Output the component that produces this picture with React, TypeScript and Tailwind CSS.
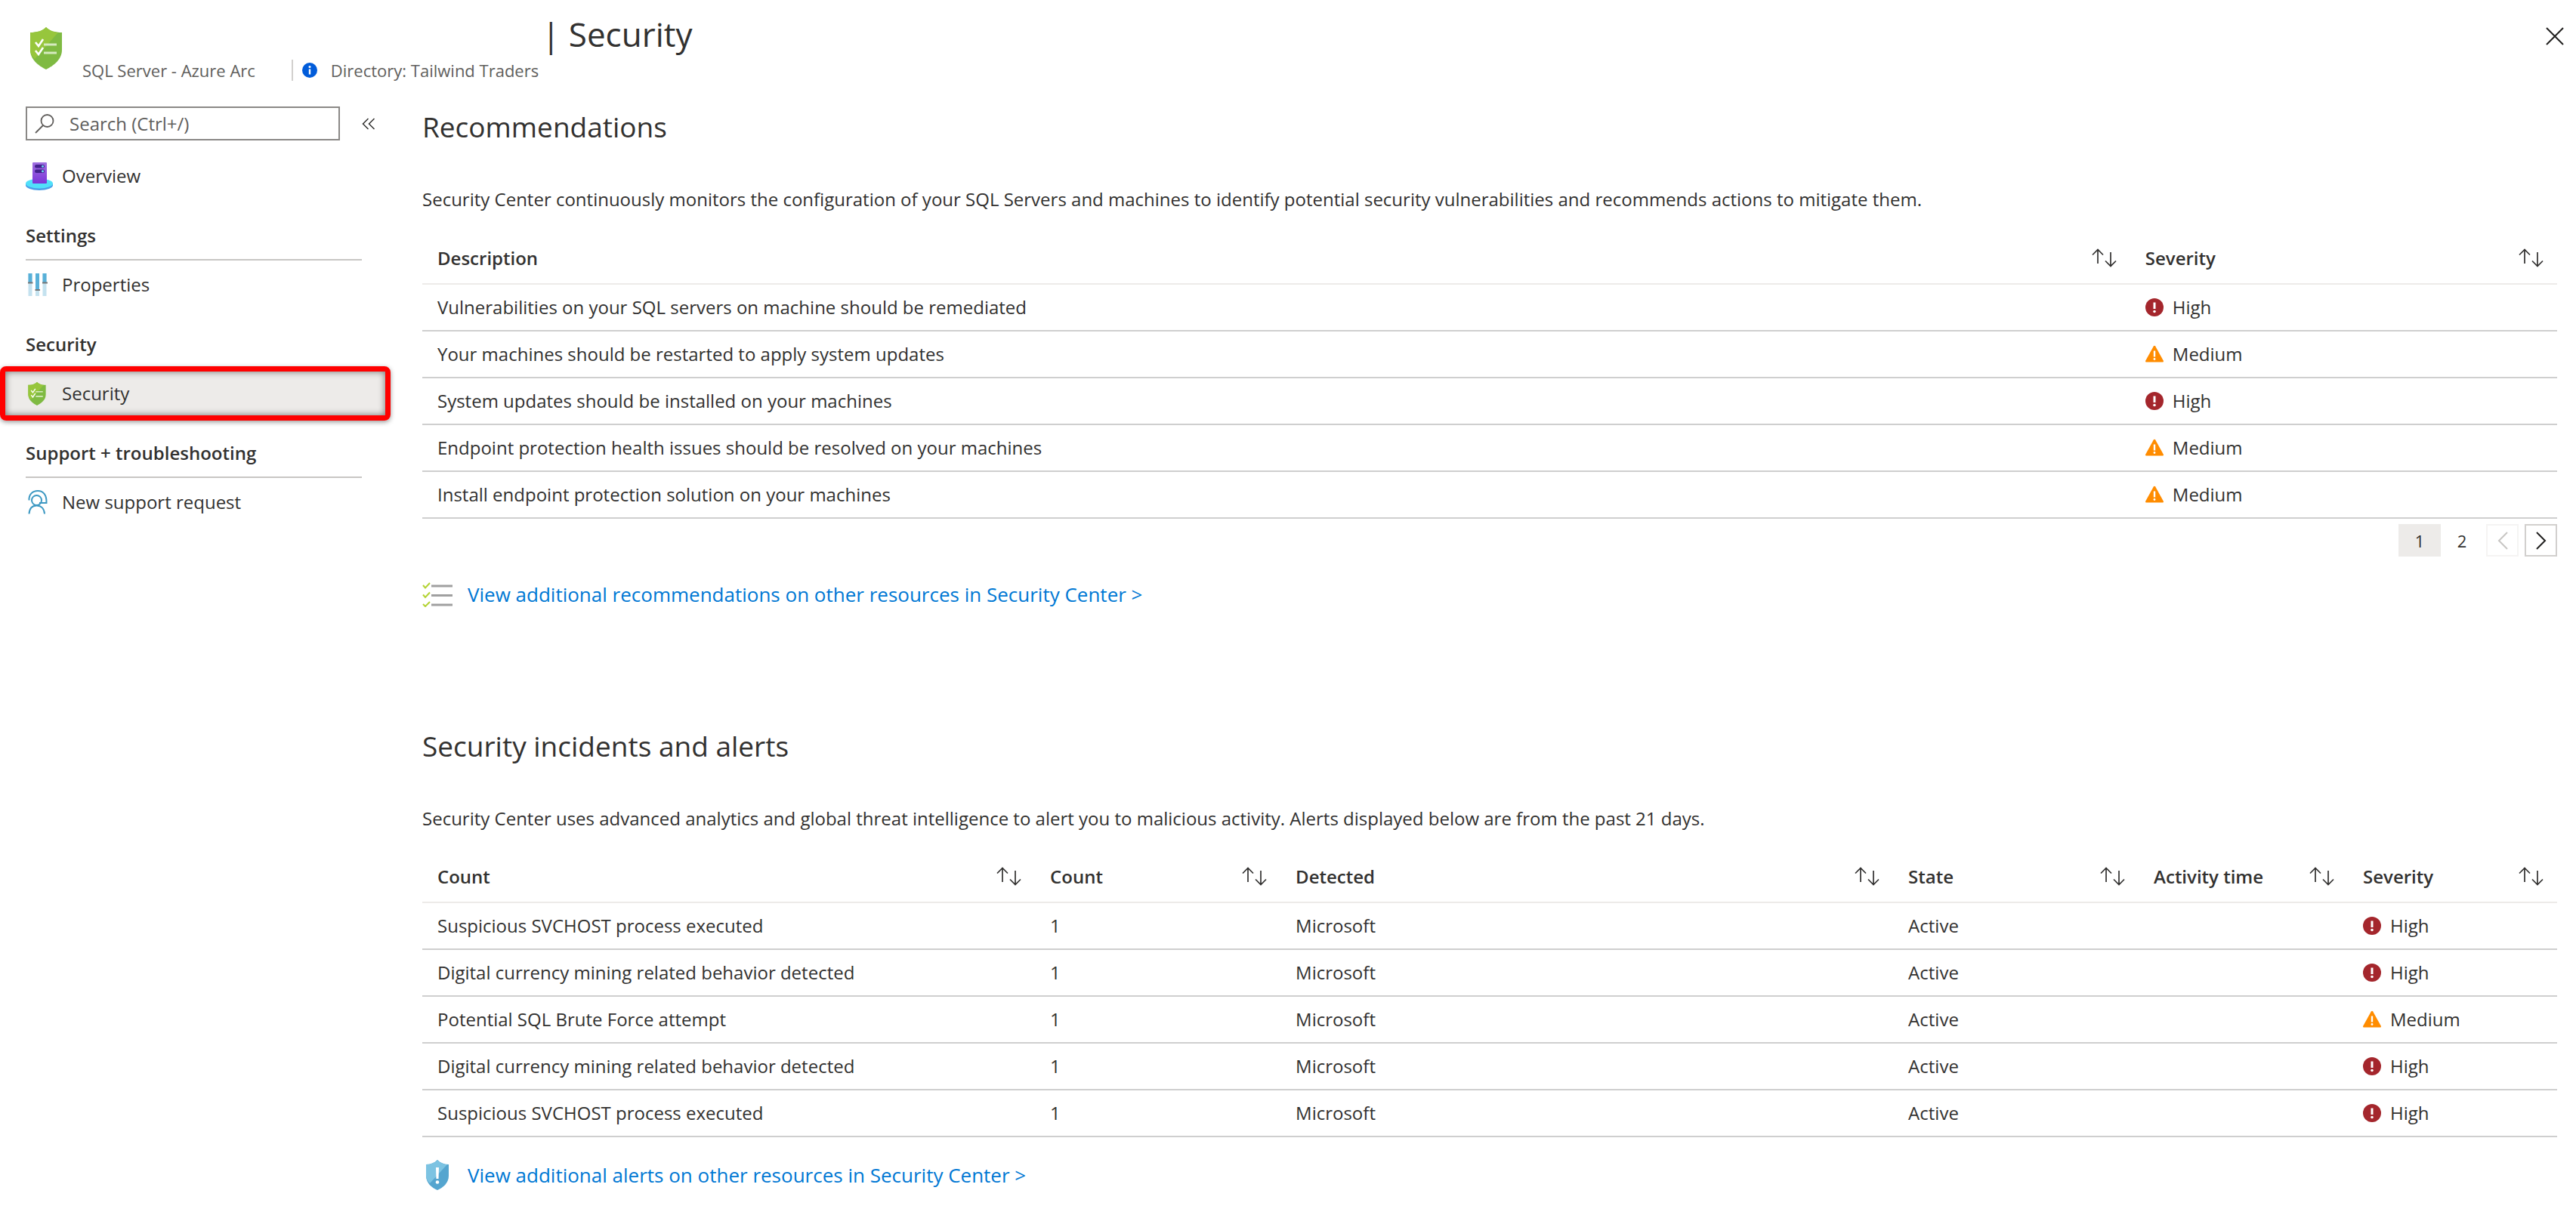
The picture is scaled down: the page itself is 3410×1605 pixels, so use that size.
import React from "react";

type Level = "High" | "Medium";

function ShieldCheck({ className }: { className: string }) {
  return (
    <svg viewBox="0 0 42 56" className={className} aria-hidden="true">
      <path d="M21 0C26 5 33 7 42 7V30C42 43 31 51 21 56C11 51 0 43 0 30V7C9 7 16 5 21 0Z" fill="#7fba42" />
      <path d="M21 0C26 5 33 7 37 7L6 42C2 38 0 34 0 30V7C9 7 16 5 21 0Z" fill="#97c63c" />
      <path d="M7 20L11 25L17 16M7 31L11 36L17 27" fill="none" stroke="#fff" strokeWidth="2.6" />
      <path d="M18 23H35M18 34H35" stroke="#d6eabf" strokeWidth="3" />
    </svg>
  );
}

function InfoIcon() {
  return (
    <svg viewBox="0 0 20 20" className="size-5" aria-hidden="true">
      <circle cx="10" cy="10" r="10" fill="#015cda" />
      <path d="M10 8.5V15.5" stroke="#fff" strokeWidth="2.4" />
      <circle cx="10" cy="5.4" r="1.5" fill="#fff" />
    </svg>
  );
}

function ServerIcon() {
  return (
    <svg viewBox="0 0 36 38" className="h-[38px] w-9" aria-hidden="true">
      <path d="M0 29V31.500C0 35 8 38 18 38S36 35 36 31.500V29Z" fill="#4a9fe8" />
      <ellipse cx="18" cy="29" rx="18" ry="6.500" fill="#50e0fa" />
      <defs>
        <linearGradient id="tower" x1="0" y1="0" x2="0" y2="1">
          <stop offset="0" stopColor="#a070e0" />
          <stop offset="1" stopColor="#7a35d8" />
        </linearGradient>
      </defs>
      <rect x="9" y="1" width="19" height="28" rx="1" fill="url(#tower)" />
      <rect x="12" y="4" width="13" height="4.5" rx="2.2" fill="#42218c" />
      <rect x="12" y="10.5" width="13" height="4.5" rx="2.2" fill="#42218c" />
      <circle cx="22.5" cy="6.2" r="1.5" fill="#6fd8f5" />
      <circle cx="22.5" cy="12.7" r="1.5" fill="#6fd8f5" />
    </svg>
  );
}

function SlidersIcon() {
  return (
    <svg viewBox="0 0 26 30" className="ml-[3px] h-[30px] w-[26px]" aria-hidden="true">
      <path d="M3 0V30M12.500 0V30M22 0V30" stroke="#c4e2ef" strokeWidth="5" />
      <path d="M3 0V12M12.500 0V21M22 0V12" stroke="#58b0d8" strokeWidth="5" />
      <path d="M0 12.500H6.500M9.500 22H16M19 12.500H26" stroke="#777" strokeWidth="2" />
    </svg>
  );
}

function SupportIcon() {
  return (
    <svg viewBox="0 0 26 32" className="ml-[3px] h-8 w-[26px]" fill="none" stroke="#3c98c2" strokeWidth="2" aria-hidden="true">
      <path d="M1.500 13.500C1 6 6 1 13 1S25 6 24.500 17H15" />
      <circle cx="11.500" cy="13.500" r="6.500" />
      <path d="M1.500 31.500C2 24 6 20.500 11.500 20.500S21.500 24 22 31.500" />
    </svg>
  );
}

function SortIcon() {
  return (
    <svg viewBox="0 0 33 25" className="h-[25px] w-[33px]" fill="none" stroke="#323130" strokeWidth="1.7" aria-hidden="true">
      <path d="M8 20V1.500M1 8.500L8 1.500L15 8.500M25 5V23.500M18 16.500L25 23.500L32 16.500" />
    </svg>
  );
}

function ChecklistIcon() {
  return (
    <svg viewBox="0 0 40 33" className="h-[33px] w-10" fill="none" aria-hidden="true">
      <path d="M1 4L4 7.500L10 1M1 16.500L4 20L10 13.500M1 29L4 32L10 26" stroke="#b4d334" strokeWidth="2" />
      <path d="M12 5H40M12 17.500H40M12 30H40" stroke="#a0a0a0" strokeWidth="3" />
    </svg>
  );
}

function AlertShield() {
  return (
    <svg viewBox="0 0 30 40" className="h-10 w-[30px]" aria-hidden="true">
      <path d="M15 0C19 4 24 6 30 6V21C30 31 22 37 15 40C8 37 0 31 0 21V6C6 6 11 4 15 0Z" fill="#55a5cf" />
      <path d="M15 0C19 4 24 6 28 6L5 31C2 28 0 25 0 21V6C6 6 11 4 15 0Z" fill="#7cc3e2" />
      <path d="M13 10H17L16.500 25H13.500Z" fill="#fff" />
      <circle cx="15" cy="29.500" r="2.300" fill="#fff" />
    </svg>
  );
}

function SeverityIcon({ level }: { level: Level }) {
  return level === "High" ? (
    <svg viewBox="0 0 24 24" className="size-6 shrink-0" aria-hidden="true">
      <circle cx="12" cy="12" r="12" fill="#a4262c" />
      <path d="M12 5.500V14" stroke="#fff" strokeWidth="3" />
      <circle cx="12" cy="17.500" r="1.800" fill="#fff" />
    </svg>
  ) : (
    <svg viewBox="0 0 24 24" className="size-6 shrink-0" aria-hidden="true">
      <path d="M10.800 1.500Q12 0 13.200 1.500L24 21Q24 22.500 23 22.500H1Q0 22.500 0 21Z" fill="#ff8c00" />
      <path d="M12 7.500V15.500" stroke="#fff" strokeWidth="2.400" />
      <circle cx="12" cy="18.500" r="1.400" fill="#fff" />
    </svg>
  );
}

function Severity({ level }: { level: Level }) {
  return (
    <span className="flex items-center gap-3">
      <SeverityIcon level={level} />
      {level}
    </span>
  );
}

type Column = { label: string; width: string };

function DataTable({ label, columns, rows }: { label: string; columns: Column[]; rows: string[][] }) {
  return (
    <table aria-label={label} className="w-full table-fixed border-collapse text-left">
      <thead>
        <tr className="h-[68px] border-b-2 border-[#edebe9]">
          {columns.map((c, i) => (
            <th key={i} scope="col" className={`${c.width} pr-[18px] pl-5 font-semibold`}>
              <button type="button" className="flex w-full items-center justify-between font-semibold">
                {c.label}
                <SortIcon />
              </button>
            </th>
          ))}
        </tr>
      </thead>
      <tbody>
        {rows.map((row, r) => (
          <tr key={r} className="h-[62px] border-b-2 border-[#cfcfcf]">
            {row.map((cell, i) => (
              <td key={i} className="pl-5 whitespace-nowrap">
                {i === row.length - 1 ? <Severity level={cell as Level} /> : cell}
              </td>
            ))}
          </tr>
        ))}
      </tbody>
    </table>
  );
}

const recommendationColumns: Column[] = [
  { label: "Description", width: "w-[80%]" },
  { label: "Severity", width: "w-[20%]" },
];

const recommendations = [
  ["Vulnerabilities on your SQL servers on machine should be remediated", "High"],
  ["Your machines should be restarted to apply system updates", "Medium"],
  ["System updates should be installed on your machines", "High"],
  ["Endpoint protection health issues should be resolved on your machines", "Medium"],
  ["Install endpoint protection solution on your machines", "Medium"],
];

const alertColumns: Column[] = [
  { label: "Count", width: "w-[28.7%]" },
  { label: "Count", width: "w-[11.5%]" },
  { label: "Detected", width: "w-[28.7%]" },
  { label: "State", width: "w-[11.5%]" },
  { label: "Activity time", width: "w-[9.8%]" },
  { label: "Severity", width: "w-[9.8%]" },
];

const alerts = [
  ["Suspicious SVCHOST process executed", "1", "Microsoft", "Active", "", "High"],
  ["Digital currency mining related behavior detected", "1", "Microsoft", "Active", "", "High"],
  ["Potential SQL Brute Force attempt", "1", "Microsoft", "Active", "", "Medium"],
  ["Digital currency mining related behavior detected", "1", "Microsoft", "Active", "", "High"],
  ["Suspicious SVCHOST process executed", "1", "Microsoft", "Active", "", "High"],
];

function NavLink({ icon, children }: { icon: React.ReactNode; children: React.ReactNode }) {
  return (
    <a href="#" className="flex h-16 items-center pl-[34px]">
      <span className="flex w-12">{icon}</span>
      {children}
    </a>
  );
}

function NavHeading({ children, line = true }: { children: React.ReactNode; line?: boolean }) {
  return (
    <h2 className={`mt-4 mr-[38px] ml-[34px] flex h-16 items-center border-b-2 font-semibold ${line ? "border-[#c8c6c4]" : "border-transparent"}`}>
      {children}
    </h2>
  );
}

function Sidebar() {
  return (
    <nav aria-label="Resource menu" className="w-[517px] shrink-0">
      <div className="mb-[15px] flex items-center">
        <label className="ml-[34px] flex h-[45px] w-[416px] items-center border-2 border-[#8a8886]">
          <svg viewBox="0 0 26 26" className="ml-2.5 size-[26px]" fill="none" stroke="#605e5c" strokeWidth="1.8" aria-hidden="true">
            <circle cx="16.500" cy="9" r="8" />
            <path d="M11 15L1 25" />
          </svg>
          <input type="search" aria-label="Search" placeholder="Search (Ctrl+/)" className="ml-5 min-w-0 flex-1 outline-none placeholder:text-[#605e5c]" />
        </label>
        <button type="button" aria-label="Collapse menu" className="ml-[29px]">
          <svg viewBox="0 0 18 16" className="h-4 w-[18px]" fill="none" stroke="#323130" strokeWidth="1.5" aria-hidden="true">
            <path d="M8.500 1L1.500 8L8.500 15M16.500 1L9.500 8L16.500 15" />
          </svg>
        </button>
      </div>
      <NavLink icon={<ServerIcon />}>Overview</NavLink>
      <NavHeading>Settings</NavHeading>
      <NavLink icon={<SlidersIcon />}>Properties</NavLink>
      <NavHeading line={false}>Security</NavHeading>
      <div className="relative bg-[#edebe9]">
        <NavLink icon={<ShieldCheck className="ml-[3px] h-[31px] w-6" />}>Security</NavLink>
        <div className="pointer-events-none absolute inset-x-0 -inset-y-1 rounded-lg border-[7px] border-[#ff0000] shadow-[inset_0_0_10px_#0008,0_2px_6px_#0006]" />
      </div>
      <NavHeading>Support + troubleshooting</NavHeading>
      <NavLink icon={<SupportIcon />}>New support request</NavLink>
    </nav>
  );
}

function SectionLink({ icon, children }: { icon: React.ReactNode; children: React.ReactNode }) {
  return (
    <a href="#" className="flex h-10 items-center text-[26px] text-[#0078d4]">
      <span className="flex w-[60px]">{icon}</span>
      {children}
    </a>
  );
}

function Pager() {
  return (
    <div className="mt-[7px] flex h-[43px] justify-end text-[22px]">
      <button type="button" className="w-14 bg-[#edebe9]">1</button>
      <button type="button" className="w-14">2</button>
      <button type="button" disabled aria-label="Previous page" className="ml-1 flex w-[43px] items-center justify-center border-2 border-[#f5f4f3]">
        <svg viewBox="0 0 14 24" className="h-6 w-3.5" fill="none" stroke="#c8c6c4" strokeWidth="2" aria-hidden="true">
          <path d="M13 1L2 12L13 23" />
        </svg>
      </button>
      <button type="button" aria-label="Next page" className="ml-2 flex w-[43px] items-center justify-center border-2 border-[#d2d0ce]">
        <svg viewBox="0 0 14 24" className="h-6 w-3.5" fill="none" stroke="#201f1e" strokeWidth="2" aria-hidden="true">
          <path d="M1 1L12 12L1 23" />
        </svg>
      </button>
    </div>
  );
}

export default function App() {
  return (
    <div className="min-h-screen bg-white font-['Open_Sans','Noto_Sans',sans-serif] text-2xl leading-9 text-[#323130]">
      <header className="flex h-[141px] items-start pr-4 pl-10">
        <ShieldCheck className="mt-9 h-14 w-[42px]" />
        <div className="mt-[75px] ml-[27px] flex items-center text-[22px] text-[#605e5c]">
          <span>SQL Server - Azure Arc</span>
          <span className="mr-3 ml-12 h-7 w-0.5 bg-[#d2d0ce]" />
          <InfoIcon />
          <span className="ml-[18px]">Directory: Tailwind Traders</span>
        </div>
        <h1 className="mt-[15px] ml-1 text-[44px] leading-[60px]">| Security</h1>
        <button type="button" aria-label="Close" className="mt-9 ml-auto">
          <svg viewBox="0 0 24 24" className="size-6" stroke="#201f1e" strokeWidth="2" aria-hidden="true">
            <path d="M1 1L23 23M23 1L1 23" />
          </svg>
        </button>
      </header>
      <div className="flex">
        <Sidebar />
        <main className="ml-[42px] min-w-0 flex-1 pr-[25px]">
          <h2 className="text-[37px] leading-[54px]">Recommendations</h2>
          <p className="mt-[51px]">
            Security Center continuously monitors the configuration of your SQL Servers and machines to identify potential security vulnerabilities and recommends actions to mitigate them.
          </p>
          <div className="mt-[26px]">
            <DataTable label="Recommendations" columns={recommendationColumns} rows={recommendations} />
          </div>
          <Pager />
          <div className="mt-[30px]">
            <SectionLink icon={<ChecklistIcon />}>View additional recommendations on other resources in Security Center &gt;</SectionLink>
          </div>
          <h2 className="mt-[154px] text-[37px] leading-[54px]">Security incidents and alerts</h2>
          <p className="mt-[51px]">
            Security Center uses advanced analytics and global threat intelligence to alert you to malicious activity. Alerts displayed below are from the past 21 days.
          </p>
          <div className="mt-[25px]">
            <DataTable label="Security incidents and alerts" columns={alertColumns} rows={alerts} />
          </div>
          <div className="mt-[30px] pb-6">
            <SectionLink icon={<span className="ml-[5px]"><AlertShield /></span>}>View additional alerts on other resources in Security Center &gt;</SectionLink>
          </div>
        </main>
      </div>
    </div>
  );
}
